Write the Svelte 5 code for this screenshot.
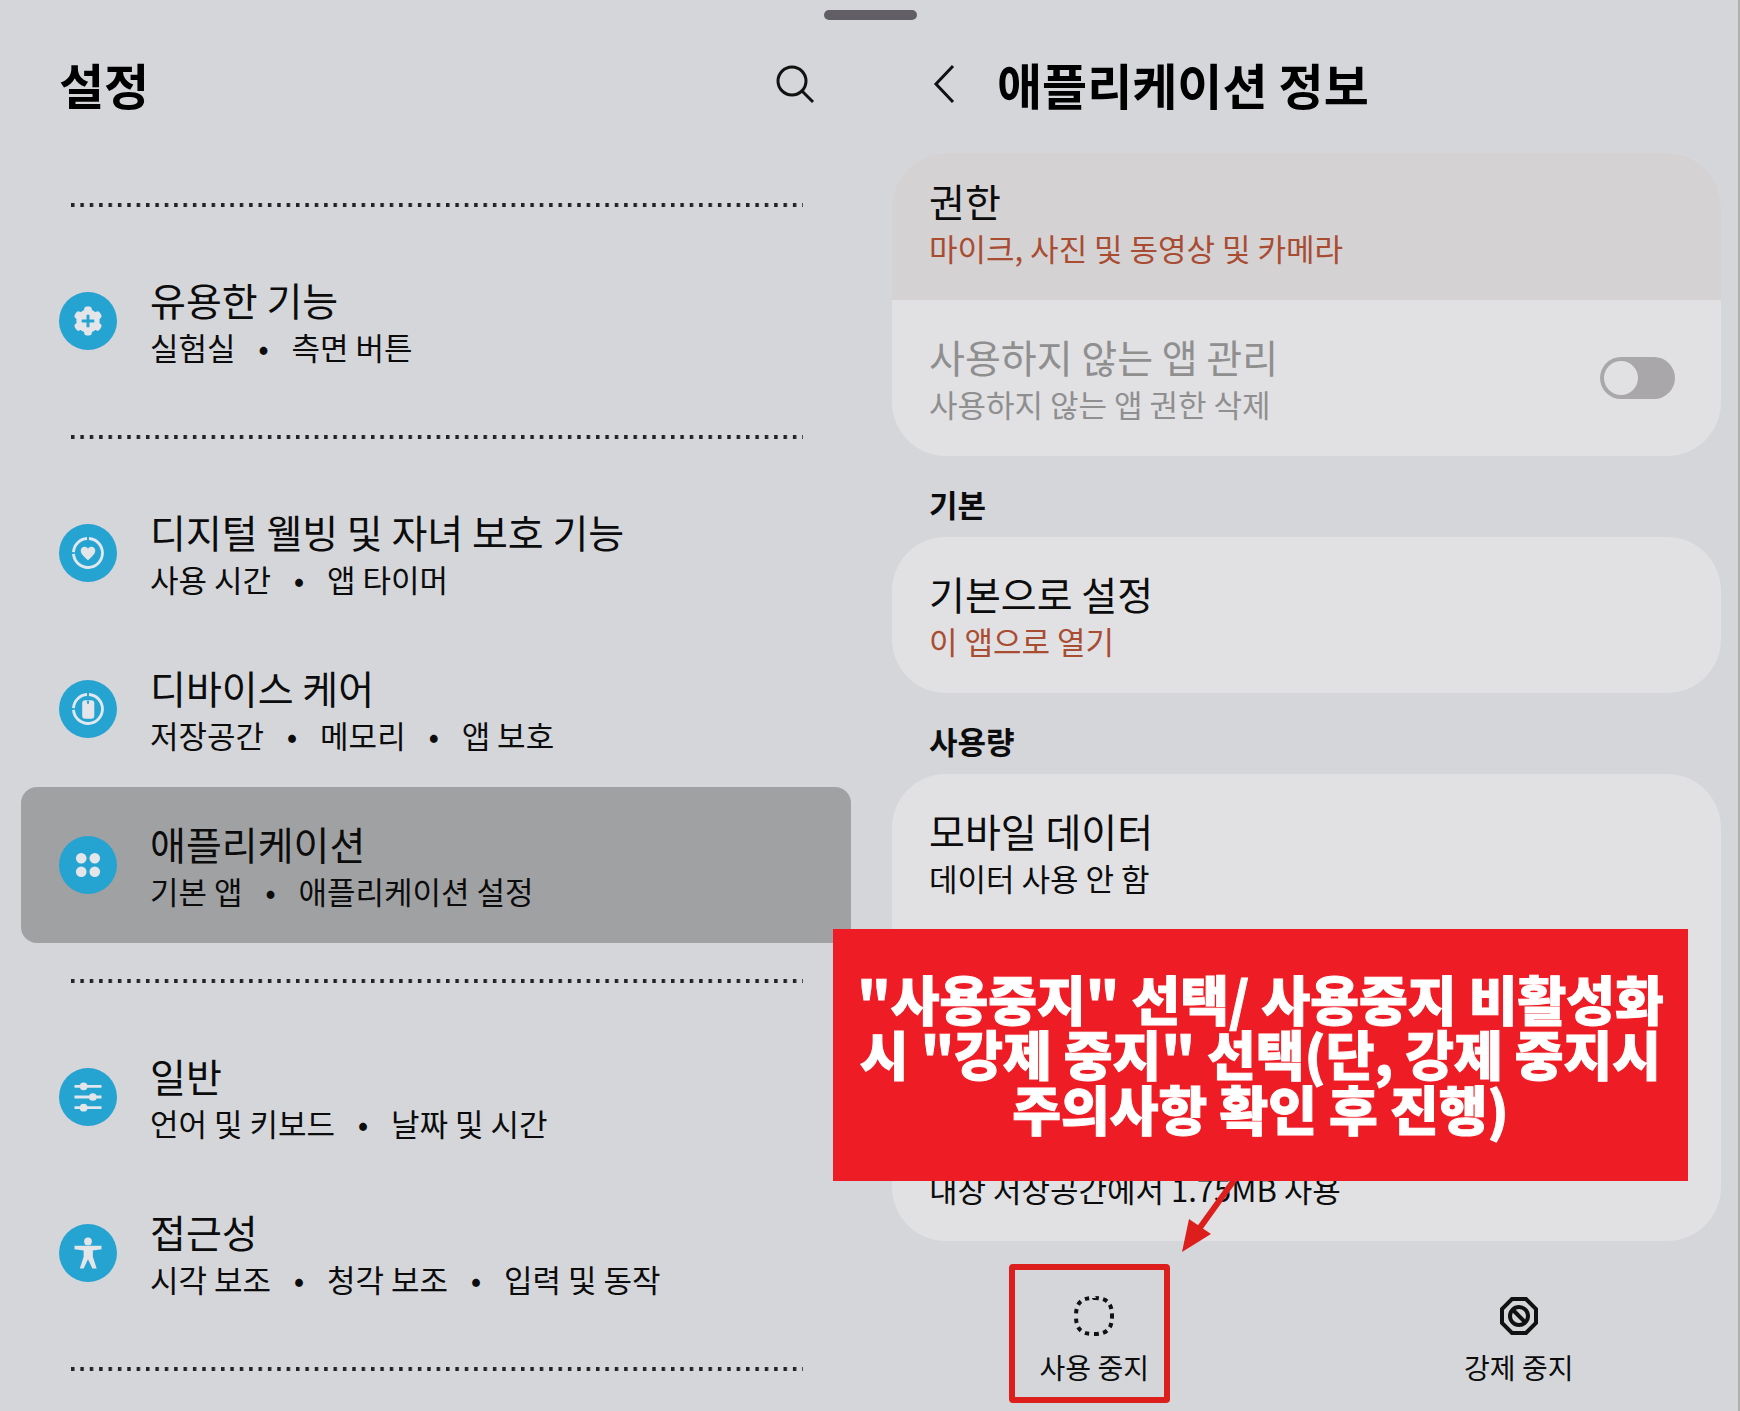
<script>
  const groups = [
    [{ icon: 'gear', title: '유용한 기능', tags: ['실험실', '측면 버튼'] }],
    [
      { icon: 'heart', title: '디지털 웰빙 및 자녀 보호 기능', tags: ['사용 시간', '앱 타이머'] },
      { icon: 'device', title: '디바이스 케어', tags: ['저장공간', '메모리', '앱 보호'] },
      { icon: 'apps', title: '애플리케이션', tags: ['기본 앱', '애플리케이션 설정'], active: true }
    ],
    [
      { icon: 'sliders', title: '일반', tags: ['언어 및 키보드', '날짜 및 시간'] },
      { icon: 'person', title: '접근성', tags: ['시각 보조', '청각 보조', '입력 및 동작'] }
    ]
  ];
  let manageUnused = $state(false);
</script>

<div class="screen">
  <div class="handle"></div>

  <nav class="pane left">
    <header>
      <h1>설정</h1>
      <button class="plain" aria-label="검색">
        <svg class="glyph" viewBox="0 0 40 40">
          <circle cx="17" cy="17" r="14" />
          <path d="M27 27 L38 38" />
        </svg>
      </button>
    </header>

    {#each groups as group}
      <div class="divider"></div>
      {#each group as item}
        <a class="item" class:active={item.active} href="#{item.icon}">
          <svg class="badge" viewBox="0 0 60 60">
            <circle class="disc" cx="30" cy="30" r="30" />
            {#if item.icon === 'gear'}
              <circle class="fill" cx="30" cy="30" r="12" />
              {#each [0, 60, 120] as turn}
                <rect class="fill" x="26" y="15" width="8" height="30" rx="3" transform="rotate({turn} 30 30)" />
              {/each}
              <path class="cut" d="M30 23.500 V36.500 M23.500 30 H36.500" />
            {:else if item.icon === 'heart' || item.icon === 'device'}
              <path class="line" d="M31 15 A15 15 0 1 1 15 31 M15 29 A15 15 0 0 1 29 15" />
              {#if item.icon === 'heart'}
                <path class="fill" d="M30 37.500 C26 34 22.500 31 22.500 27.500 C22.500 23.500 27.500 22 30 25.500 C32.500 22 37.500 23.500 37.500 27.500 C37.500 31 34 34 30 37.500 Z" />
              {:else}
                <rect class="fill" x="24" y="21" width="12.500" height="19" rx="3" />
                <path class="cut thin" d="M30 21.500 V24.500" />
              {/if}
            {:else if item.icon === 'apps'}
              <circle class="fill" cx="23" cy="23" r="5.500" />
              <circle class="fill" cx="37" cy="23" r="5.500" />
              <circle class="fill" cx="23" cy="37" r="5.500" />
              <circle class="fill" cx="37" cy="37" r="5.500" />
            {:else if item.icon === 'sliders'}
              <path class="line" d="M16 19 H44 M16 30 H44 M16 41 H44" />
              <circle class="fill" cx="25.500" cy="19" r="4" />
              <circle class="fill" cx="35" cy="30" r="4" />
              <circle class="fill" cx="25.500" cy="41" r="4" />
            {:else}
              <circle class="fill" cx="30" cy="18" r="4" />
              <path class="fill" d="M16 22.500 H44 V26 L35 27.500 V34 L39 46 H34.500 L30 36.500 L25.500 46 H21.500 L25.500 34 V27.500 L16 26 Z" />
            {/if}
          </svg>
          <span class="copy">
            <span class="title">{item.title}</span>
            <span class="sub tags">
              {#each item.tags as tag, i}
                {#if i > 0}<span class="dot">•</span>{/if}
                <span>{tag}</span>
              {/each}
            </span>
          </span>
        </a>
      {/each}
    {/each}
    <div class="divider"></div>
  </nav>

  <main class="pane right">
    <header>
      <button class="plain" aria-label="뒤로">
        <svg class="back" viewBox="0 0 22 40"><path d="M20 2 L3 20 L20 38" /></svg>
      </button>
      <h1>애플리케이션 정보</h1>
    </header>

    <section class="card">
      <a class="row pressed" href="#permissions">
        <span class="copy">
          <span class="title">권한</span>
          <span class="sub accent">마이크, 사진 및 동영상 및 카메라</span>
        </span>
      </a>
      <label class="row muted">
        <span class="copy">
          <span class="title">사용하지 않는 앱 관리</span>
          <span class="sub">사용하지 않는 앱 권한 삭제</span>
        </span>
        <input type="checkbox" role="switch" bind:checked={manageUnused} disabled />
      </label>
    </section>

    <h2>기본</h2>
    <section class="card">
      <a class="row" href="#defaults">
        <span class="copy">
          <span class="title">기본으로 설정</span>
          <span class="sub accent">이 앱으로 열기</span>
        </span>
      </a>
    </section>

    <h2>사용량</h2>
    <div class="usage">
      <section class="card">
        <a class="row" href="#data">
          <span class="copy">
            <span class="title">모바일 데이터</span>
            <span class="sub">데이터 사용 안 함</span>
          </span>
        </a>
        <a class="row" href="#storage">
          <span class="copy">
            <span class="title">저장공간</span>
            <span class="sub">내장 저장공간에서 1.75MB 사용</span>
          </span>
        </a>
      </section>
      <aside class="note">
        <p>"사용중지" 선택/ 사용중지 비활성화<br />시 "강제 중지" 선택(단, 강제 중지시<br />주의사항 확인 후 진행)</p>
        <svg class="arrow" viewBox="0 0 56 72">
          <path class="shaft" d="M54 -2 L18 48" />
          <path class="head" d="M1 71 L8 38 L30 53 Z" />
        </svg>
      </aside>
    </div>

    <footer>
      <div class="slot">
        <button class="action">
          <svg class="tool" viewBox="0 0 40 40">
            <path class="dots" pathLength="130" d="M20 2 C33 2 38 7 38 20 C38 33 33 38 20 38 C7 38 2 33 2 20 C2 7 7 2 20 2 Z" />
          </svg>
          <span>사용 중지</span>
          <span class="marker"></span>
        </button>
      </div>
      <div class="slot">
        <button class="action">
          <svg class="tool" viewBox="0 0 40 40">
            <path d="M13 3 H27 L37 13 V27 L27 37 H13 L3 27 V13 Z" />
            <circle cx="20" cy="20" r="9" />
            <path d="M14 14 L26 26" />
          </svg>
          <span>강제 중지</span>
        </button>
      </div>
    </footer>
  </main>
</div>

<style>
  :global(body) {
    margin: 0;
    background: #d5d6da;
  }
  .screen {
    position: relative;
    box-sizing: border-box;
    min-height: 100vh;
    display: grid;
    grid-template-columns: 1fr 1fr;
    border-right: 2px solid #afb0ae;
    background: #d5d6da;
    color: #0c0c0d;
    font-family: "Noto Sans CJK KR", sans-serif;
  }
  .handle {
    position: absolute;
    top: 10px;
    left: 50%;
    width: 93px;
    height: 10px;
    margin-left: -45px;
    border-radius: 5px;
    background: #615f65;
  }
  .left {
    padding: 0 18px 0 21px;
  }
  .right {
    padding: 0 17px 0 23px;
  }
  header {
    display: flex;
    align-items: center;
    box-sizing: border-box;
    height: 153px;
    padding: 36px 0 21px;
  }
  .left header {
    justify-content: space-between;
    height: 167px;
    padding: 36px 36px 35px 38px;
  }
  .right header {
    gap: 42px;
    padding-left: 41px;
  }
  h1 {
    margin: 0;
    font-size: 49px;
    line-height: 72px;
    font-weight: 700;
    color: #000;
  }
  h2 {
    margin: 0;
    padding: 28px 37px 13px;
    font-size: 31px;
    line-height: 40px;
    font-weight: 700;
  }
  button {
    border: 0;
    padding: 0;
    background: none;
    color: inherit;
    font: inherit;
    cursor: pointer;
  }
  a {
    color: inherit;
    text-decoration: none;
  }
  svg {
    display: block;
    flex: none;
    fill: none;
    stroke: #111;
    stroke-width: 3;
  }
  .glyph {
    width: 40px;
    height: 40px;
  }
  .back {
    width: 22px;
    height: 40px;
  }
  .divider {
    height: 4px;
    margin: 36px 48px 36px 50px;
    background: linear-gradient(90deg, #222 3px, transparent 4px) 0 0 / calc(100% / 78) 4px;
  }
  .item {
    display: flex;
    align-items: center;
    gap: 33px;
    height: 156px;
    padding: 0 38px;
    border-radius: 16px;
  }
  .active {
    background: #a0a1a2;
  }
  .badge {
    width: 58px;
    height: 58px;
    stroke: none;
  }
  .disc {
    fill: #25a3d1;
  }
  .fill {
    fill: #e4e5e9;
  }
  .line {
    stroke: #e0e7ee;
    stroke-width: 3;
  }
  .cut {
    stroke: #25a3d1;
    stroke-width: 3;
  }
  .thin {
    stroke-width: 2;
  }
  .copy {
    display: flex;
    flex-direction: column;
    padding-top: 3px;
  }
  .title {
    font-size: 39px;
    line-height: 48px;
  }
  .sub {
    font-size: 31px;
    line-height: 48px;
  }
  .tags {
    display: flex;
    gap: 23px;
  }
  .dot {
    width: 10px;
    display: flex;
    justify-content: center;
  }
  .card {
    border-radius: 54px;
    overflow: hidden;
    background: #e1e1e3;
  }
  .row {
    display: flex;
    align-items: center;
    justify-content: space-between;
    height: 156px;
    padding: 0 46px 0 37px;
  }
  .pressed {
    height: 147px;
    background: #d5d2d4;
  }
  .pressed .copy {
    padding: 0 0 5px;
  }
  .accent {
    color: #a84c32;
  }
  .muted {
    color: #8f8f90;
  }
  input {
    appearance: none;
    display: flex;
    box-sizing: border-box;
    width: 75px;
    height: 42px;
    margin: 0;
    padding: 4px;
    border-radius: 21px;
    background: #a9a7aa;
  }
  input::before {
    content: "";
    width: 34px;
    height: 34px;
    border-radius: 50%;
    background: #e1e1e3;
  }
  input:checked {
    justify-content: flex-end;
  }
  .usage {
    position: relative;
  }
  .usage .card {
    display: flex;
    flex-direction: column;
    justify-content: space-between;
    min-height: 467px;
  }
  .note {
    position: absolute;
    top: 155px;
    left: -59px;
    right: 33px;
    height: 252px;
    display: flex;
    align-items: center;
    justify-content: center;
    background: #ee1c25;
    color: #fff;
    text-align: center;
  }
  p {
    margin: 0;
    padding-bottom: 4px;
    font-size: 53px;
    line-height: 55px;
    font-weight: 900;
    white-space: nowrap;
    -webkit-text-stroke: 1px #fff;
  }
  .arrow {
    position: absolute;
    top: 100%;
    left: 348px;
    width: 56px;
    height: 72px;
  }
  .shaft {
    stroke: #dc1f1c;
    stroke-width: 6;
  }
  .head {
    fill: #dc1f1c;
    stroke: none;
  }
  footer {
    display: flex;
    margin: 0 -10px;
    padding: 23px 0 8px;
  }
  .slot {
    flex: 1;
    display: flex;
    justify-content: center;
  }
  .action {
    position: relative;
    box-sizing: border-box;
    width: 161px;
    height: 139px;
    display: flex;
    flex-direction: column;
    align-items: center;
    justify-content: center;
    gap: 11px;
    padding-top: 16px;
    font-size: 28px;
    line-height: 40px;
  }
  .marker {
    position: absolute;
    inset: 0 5px 0 -5px;
    border: 6px solid #dc1f1c;
    border-radius: 4px;
  }
  .tool {
    width: 40px;
    height: 40px;
    stroke-width: 4;
  }
  .dots {
    stroke-dasharray: 5 5;
  }
</style>
